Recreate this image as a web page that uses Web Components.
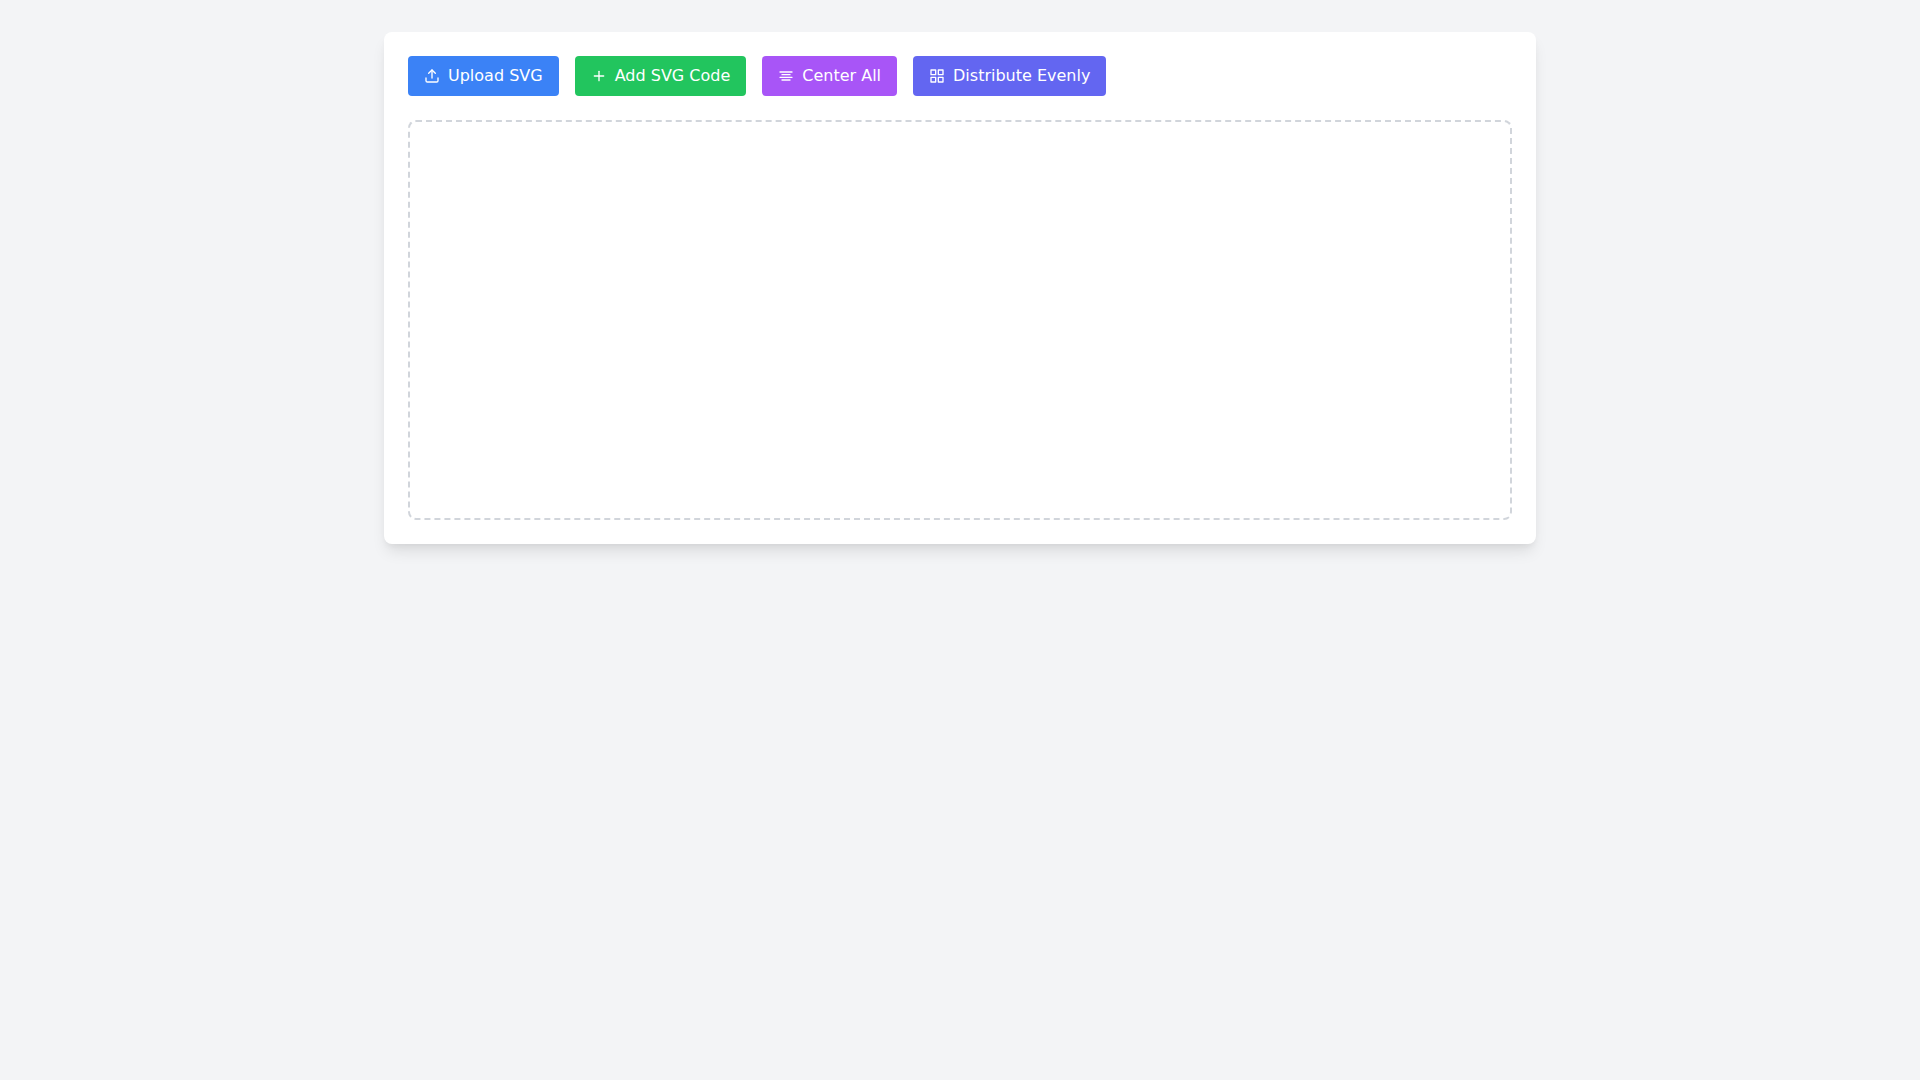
<!DOCTYPE html>
<html><head><meta charset="utf-8"><style>
html,body{margin:0;padding:0;background:#f3f4f6}
body{font-family:"DejaVu Sans",sans-serif;font-size:16px;line-height:24px;min-height:100vh;box-sizing:border-box;padding-top:32px}
</style></head><body>
<template id="t-btn"><style>
:host{display:inline-flex;align-items:center;height:40px;padding:0 16px;border-radius:4px;color:#fff;background:var(--bg);box-sizing:border-box;font-size:16px;line-height:24px}
.i{display:flex;width:16px;height:16px;margin-right:8px}
</style><span class="i"><slot name="icon"></slot></span><slot></slot></template>
<template id="t-card"><style>
:host{display:block;width:1152px;margin:0 auto;padding:24px;box-sizing:border-box;background:#fff;border-radius:8px;box-shadow:0 10px 15px -3px rgba(0,0,0,.1),0 4px 6px -2px rgba(0,0,0,.05)}
.bar{display:flex;gap:16px;margin-bottom:24px}
.canvas{height:400px;box-sizing:border-box;border:2px dashed #d1d5db;border-radius:8px}
</style><div class="bar"><slot></slot></div><div class="canvas"></div></template>
<app-card>
<app-btn style="--bg:#3b82f6"><svg slot="icon" width="16" height="16" viewBox="0 0 24 24" fill="none" stroke="currentColor" stroke-width="2" stroke-linecap="round" stroke-linejoin="round"><path d="M21 15v4a2 2 0 0 1-2 2H5a2 2 0 0 1-2-2v-4"/><polyline points="17 8 12 3 7 8"/><line x1="12" y1="3" x2="12" y2="15"/></svg>Upload SVG</app-btn>
<app-btn style="--bg:#22c55e"><svg slot="icon" width="16" height="16" viewBox="0 0 24 24" fill="none" stroke="currentColor" stroke-width="2" stroke-linecap="round" stroke-linejoin="round"><path d="M12 5v14"/><path d="M5 12h14"/></svg>Add SVG Code</app-btn>
<app-btn style="--bg:#a855f7"><svg slot="icon" width="16" height="16" viewBox="0 0 24 24" fill="none" stroke="currentColor" stroke-width="2" stroke-linecap="round" stroke-linejoin="round"><line x1="18" y1="10" x2="6" y2="10"/><line x1="21" y1="6" x2="3" y2="6"/><line x1="21" y1="14" x2="3" y2="14"/><line x1="18" y1="18" x2="6" y2="18"/></svg>Center All</app-btn>
<app-btn style="--bg:#6366f1"><svg slot="icon" width="16" height="16" viewBox="0 0 24 24" fill="none" stroke="currentColor" stroke-width="2" stroke-linecap="round" stroke-linejoin="round"><rect x="3" y="3" width="7" height="7"/><rect x="14" y="3" width="7" height="7"/><rect x="14" y="14" width="7" height="7"/><rect x="3" y="14" width="7" height="7"/></svg>Distribute Evenly</app-btn>
</app-card>
<script>
for(const [n,id] of [['app-btn','t-btn'],['app-card','t-card']]){
customElements.define(n,class extends HTMLElement{constructor(){super();this.attachShadow({mode:'open'}).appendChild(document.getElementById(id).content.cloneNode(true))}})
}
</script>
</body></html>
